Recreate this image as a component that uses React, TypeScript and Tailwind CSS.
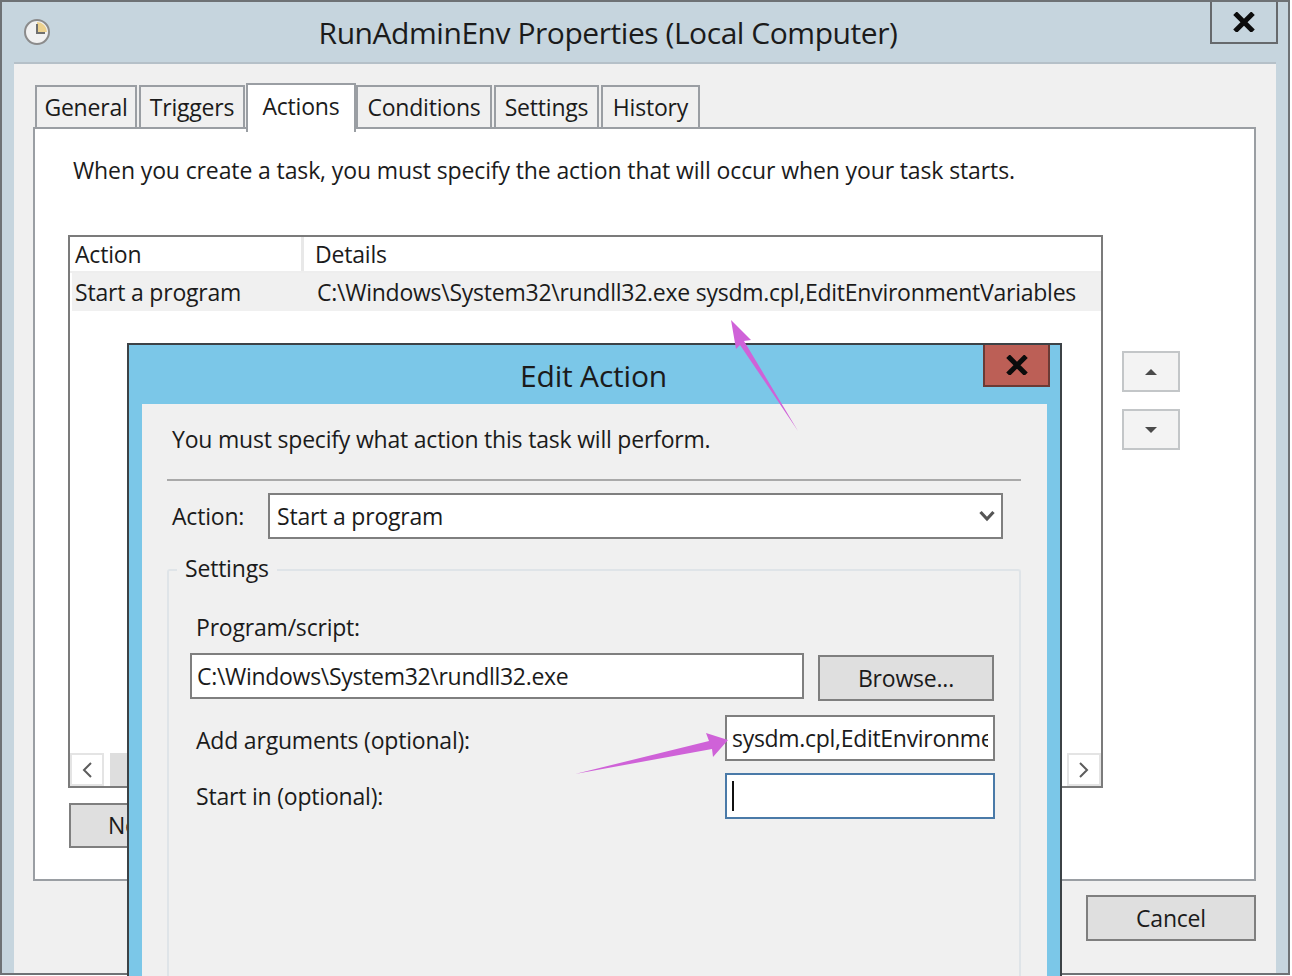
const font = "font-['Open_Sans',sans-serif] text-[#1b1b1b]";

function Tab({ label, width, active }: { label: string; width: string; active?: boolean }) {
  return active ? (
    <div className={`${width} relative z-10 -mb-[5px] -ml-px flex h-[49px] items-start justify-center border-2 border-b-0 border-[#9a9ea3] bg-white pt-[4px] text-[23px] tracking-[-0.2px]`}>
      {label}
    </div>
  ) : (
    <div className={`${width} mr-[2px] flex h-[42px] items-center justify-center border-2 border-b-0 border-[#9a9ea3] bg-[#f0f0f0] text-[23px] tracking-[-0.2px]`}>
      {label}
    </div>
  );
}

function ArrowButton({ up }: { up?: boolean }) {
  return (
    <div className="flex h-[41px] w-[58px] items-center justify-center border-2 border-[#c3c6c8] bg-[#f3f3f3]">
      <svg width="14" height="8" viewBox="0 0 14 8">
        <path d={up ? "M7 1 L13 7 H1 Z" : "M1 1 H13 L7 7 Z"} fill="#4a4a4a" />
      </svg>
    </div>
  );
}

function CloseX({ size = 24 }: { size?: number }) {
  return (
    <svg width={size} height={size * 0.85} viewBox="0 0 24 20">
      <path d="M3 1 L21 19 M21 1 L3 19" stroke="#0c0c0c" strokeWidth="5" />
    </svg>
  );
}

function GrayButton({ label, className }: { label: string; className: string }) {
  return (
    <div className={`flex items-center justify-center border-2 border-[#7f7f7f] bg-[#dfdfdf] text-[23px] tracking-[-0.2px] ${className}`}>
      {label}
    </div>
  );
}

function EditActionDialog() {
  return (
    <div className="absolute left-[127px] top-[343px] flex h-[640px] w-[935px] flex-col border-2 border-b-0 border-[#3c4246] bg-[#7bc7e8]">
      <div className="relative flex h-[59px] shrink-0 items-center justify-center pr-[2px] pt-[1px] text-[30px] tracking-[-0.2px]">
        Edit Action
        <div className="absolute right-[10px] top-0 flex h-[42px] w-[67px] items-center justify-center border-2 border-t-0 border-[#6b3a35] bg-[#bc5f56]">
          <CloseX />
        </div>
      </div>
      <div className="mx-[13px] flex-1 bg-[#f0f0f0] px-[25px]">
        <div className="flex h-[75px] items-center pl-[5px] pb-[4px] text-[23px] tracking-[-0.2px]">
          You must specify what action this task will perform.
        </div>
        <div className="h-[2px] w-[854px] bg-[#a9a9a9]" />
        <div className="mt-[12px] flex items-center">
          <span className="w-[101px] pl-[5px] text-[23px] tracking-[-0.2px]">Action:</span>
          <div className="flex h-[46px] w-[735px] items-center justify-between border-2 border-[#7f7f7f] bg-white pl-[7px] pr-[6px] text-[23px] tracking-[-0.2px]">
            Start a program
            <svg width="16" height="14" viewBox="0 0 16 14">
              <path d="M1.5 3 L8 10 L14.5 3" fill="none" stroke="#555" strokeWidth="3.2" />
            </svg>
          </div>
        </div>
        <div className="relative mt-[30px] h-[420px] w-[854px] rounded-t-[3px] border-2 border-b-0 border-[#dfe4e8] px-[21px] pt-[38px]">
          <span className="absolute -top-[20px] left-[8px] bg-[#f0f0f0] px-[8px] text-[23px] tracking-[-0.2px]">Settings</span>
          <div className="pl-[6px] text-[23px] leading-[36px] tracking-[-0.2px]">Program/script:</div>
          <div className="mt-[8px] flex items-start">
            <div className="flex h-[46px] w-[614px] items-center border-2 border-[#7f7f7f] bg-white pl-[5px] text-[23px] tracking-[-0.3px]">
              C:\Windows\System32\rundll32.exe
            </div>
            <GrayButton label="Browse..." className="ml-[14px] mt-[2px] h-[46px] w-[176px]" />
          </div>
          <div className="mt-[14px] flex items-center justify-between pr-[3px]">
            <span className="pl-[6px] pt-[4px] text-[23px] tracking-[-0.2px]">Add arguments (optional):</span>
            <div className="flex h-[46px] w-[270px] items-center overflow-hidden whitespace-nowrap border-2 border-[#7f7f7f] bg-white px-[5px] text-[23px] tracking-[-0.3px]">
              <span className="block w-[258px] overflow-hidden">sysdm.cpl,EditEnvironmentVariables</span>
            </div>
          </div>
          <div className="mt-[12px] flex items-center justify-between pr-[3px]">
            <span className="pl-[6px] text-[23px] tracking-[-0.2px]">Start in (optional):</span>
            <div className="flex h-[46px] w-[270px] items-center border-2 border-[#4a7aa8] bg-white pl-[5px]">
              <div className="h-[30px] w-[2px] bg-[#111]" />
            </div>
          </div>
        </div>
      </div>
    </div>
  );
}

export default function App() {
  return (
    <div className={`${font} relative h-[976px] w-[1292px] overflow-hidden bg-white`}>
      <div className="flex h-[975px] w-[1290px] flex-col border-2 border-[#6e7275] bg-[#c6d5de]">
        <div className="flex h-[60px] shrink-0 items-center">
          <div className="ml-[21px]">
            <svg width="28" height="28" viewBox="0 0 28 28">
              <circle cx="14" cy="14" r="12" fill="#f1f1f1" stroke="#8b8b8b" strokeWidth="2" />
              <path d="M14 14 V4 A10 10 0 0 1 24 14 Z" fill="#edd28f" />
              <path d="M14 6 V15 H22" fill="none" stroke="#6f6f6f" strokeWidth="2" />
            </svg>
          </div>
          <div className="flex-1 pr-[45px] text-center text-[30px] tracking-[-0.45px]">RunAdminEnv Properties (Local Computer)</div>
          <div className="-mt-[18px] mr-[10px] flex h-[42px] w-[68px] items-center justify-center border-2 border-t-0 border-[#66696c]">
            <CloseX />
          </div>
        </div>
        <div className="mx-[12px] min-h-0 flex-1 border-t-2 border-[#b5c0c8] bg-[#f0f0f0] px-[19px] pt-[21px]">
          <div className="flex h-[42px] items-end pl-[2px]">
            <Tab label="General" width="w-[102px]" />
            <Tab label="Triggers" width="w-[106px]" />
            <Tab label="Actions" width="w-[110px]" active />
            <Tab label="Conditions" width="w-[136px]" />
            <Tab label="Settings" width="w-[105px]" />
            <Tab label="History" width="w-[99px]" />
          </div>
          <div className="relative flex h-[754px] w-[1223px] flex-col border-2 border-[#9a9ea3] bg-white pl-[33px]">
            <div className="flex h-[83px] shrink-0 items-center pb-[1px] pl-[5px] text-[23px] tracking-[-0.12px] whitespace-nowrap">
              When you create a task, you must specify the action that will occur when your task starts.
            </div>
            <div className="mt-[23px] flex">
              <div className="flex h-[553px] w-[1035px] flex-col border-2 border-[#7b7b7b]">
                <div className="flex h-[36px] shrink-0 items-center border-b-2 border-[#eeeeee] text-[23px] tracking-[-0.2px]">
                  <span className="w-[231px] shrink-0 pl-[5px]">Action</span>
                  <span className="h-full w-[3px] bg-[#e8e8e8]" />
                  <span className="pl-[11px]">Details</span>
                </div>
                <div className="ml-[2px] flex h-[38px] shrink-0 items-center bg-[#f0f0f0] text-[23px] tracking-[-0.2px]">
                  <span className="w-[232px] shrink-0 pl-[3px]">Start a program</span>
                  <span className="whitespace-nowrap pl-[13px] tracking-[-0.25px]">C:\Windows\System32\rundll32.exe sysdm.cpl,EditEnvironmentVariables</span>
                </div>
                <div className="flex-1" />
                <div className="flex h-[33px] shrink-0 justify-between">
                  <div className="flex">
                    <div className="flex w-[34px] items-center justify-center border-2 border-[#e4e4e4] text-[#555]">
                      <svg width="12" height="18" viewBox="0 0 12 18"><path d="M10 2 L3 9 L10 16" fill="none" stroke="#5c5c5c" strokeWidth="2" /></svg>
                    </div>
                    <div className="ml-[6px] w-[40px] bg-[#dedede]" />
                  </div>
                  <div className="flex w-[34px] items-center justify-center border-2 border-[#e4e4e4]">
                    <svg width="12" height="18" viewBox="0 0 12 18"><path d="M2 2 L9 9 L2 16" fill="none" stroke="#5c5c5c" strokeWidth="2" /></svg>
                  </div>
                </div>
              </div>
              <div className="ml-[19px] mt-[116px] flex flex-col gap-[17px]">
                <ArrowButton up />
                <ArrowButton />
              </div>
            </div>
            <GrayButton label="New..." className="ml-[1px] mt-[15px] h-[45px] w-[176px] justify-start pl-[37px]" />
          </div>
          <div className="mt-[14px] flex justify-end pr-[1px]">
            <GrayButton label="Cancel" className="h-[46px] w-[170px]" />
          </div>
        </div>
      </div>

      <EditActionDialog />

      <svg className="absolute left-0 top-0" width="1292" height="976" viewBox="0 0 1292 976">
        <path d="M731 320 L751 340 L744 341 L798 431 L740 345 L736 349 Z" fill="#cf62d8" />
        <path d="M728 740 L706 733 L709 741 L575 774 L712 749 L713 757 Z" fill="#cf62d8" />
      </svg>
    </div>
  );
}
